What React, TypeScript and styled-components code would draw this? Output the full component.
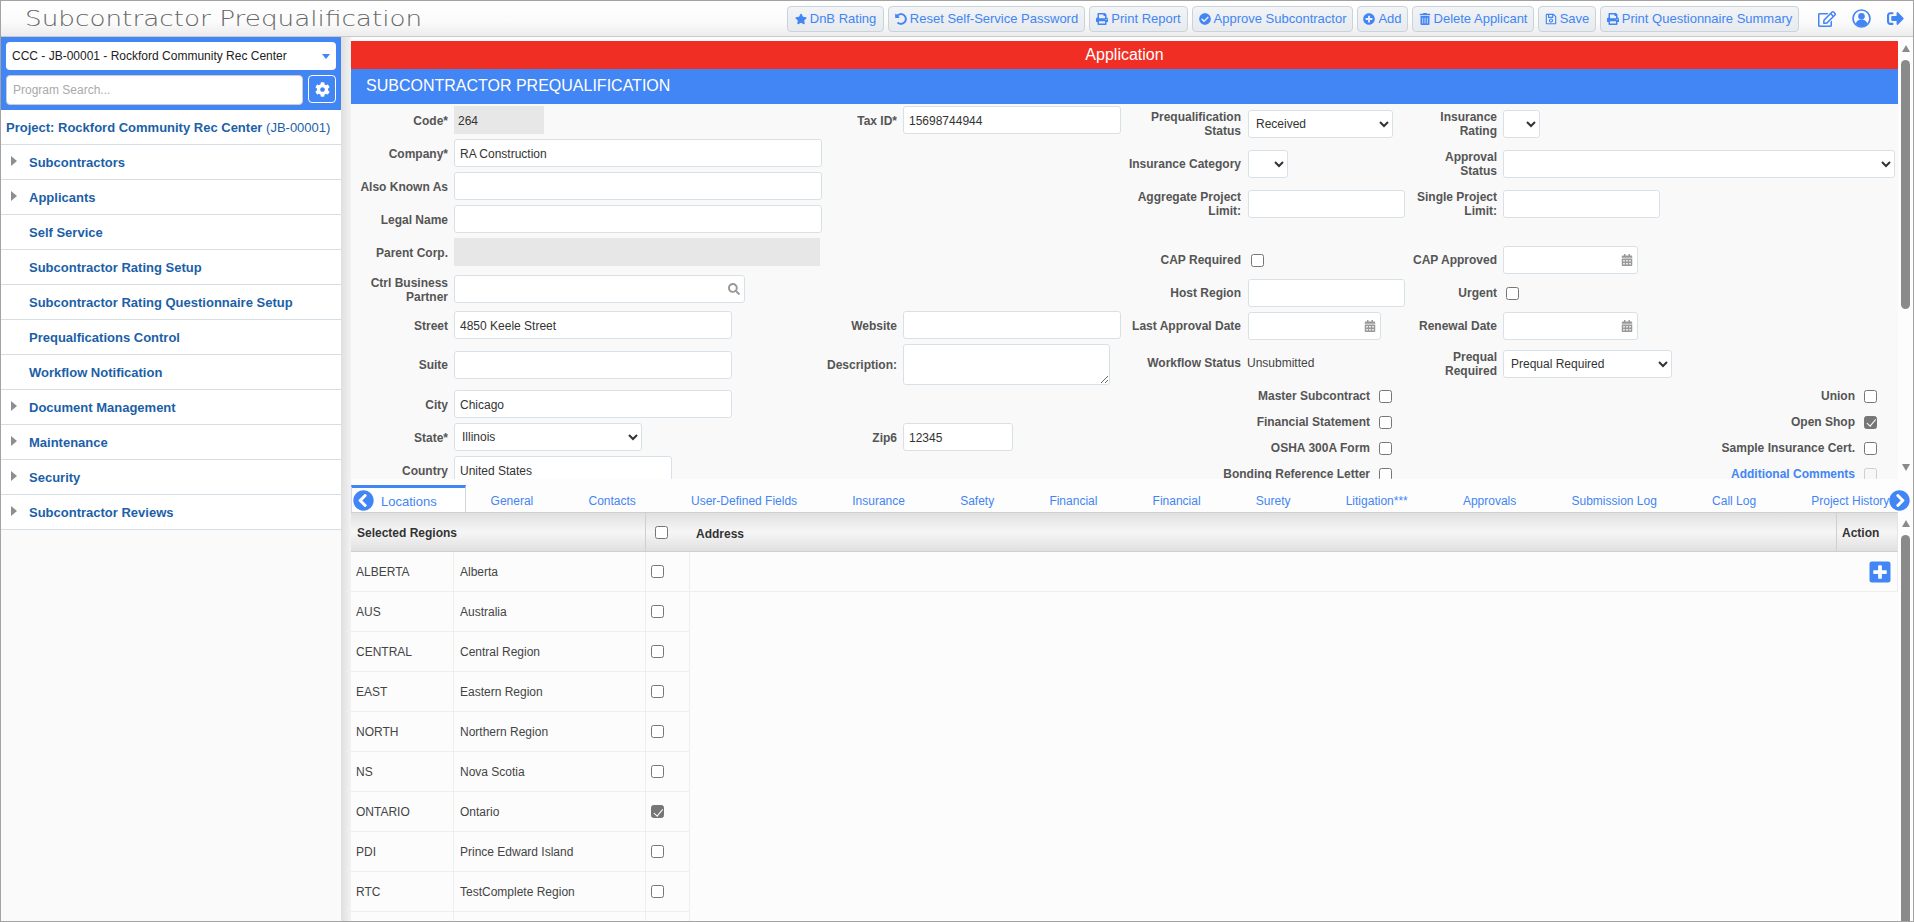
import React from 'react';
import styled, {createGlobalStyle} from 'styled-components';
import {
    FaStar, FaUndoAlt, FaPrint, FaCheckCircle, FaPlusCircle, FaTrashAlt, FaRegSave, FaRegEdit,
    FaSignOutAlt, FaCog, FaSearch, FaCalendarAlt, FaChevronCircleLeft, FaChevronCircleRight, FaPlusSquare,
} from 'react-icons/fa';

const sans = '"Liberation Sans", Arial, sans-serif';
const linkBlue = '#4285f4';

const GlobalStyle = createGlobalStyle`
    html, body { margin: 0; padding: 0; overflow: hidden; }
    body { font-family: ${sans}; background: #fff; }
    * { box-sizing: border-box; }
`;

const toolbarButtons = [
    {icon: <FaStar />, label: 'DnB Rating', width: 97},
    {icon: <FaUndoAlt />, label: 'Reset Self-Service Password', width: 197},
    {icon: <FaPrint />, label: 'Print Report', width: 99},
    {icon: <FaCheckCircle />, label: 'Approve Subcontractor', width: 161},
    {icon: <FaPlusCircle />, label: 'Add', width: 51},
    {icon: <FaTrashAlt />, label: 'Delete Applicant', width: 122},
    {icon: <FaRegSave />, label: 'Save', width: 58},
    {icon: <FaPrint />, label: 'Print Questionnaire Summary', width: 199},
];

const menuItems = [
    {label: 'Subcontractors', arrow: true},
    {label: 'Applicants', arrow: true},
    {label: 'Self Service'},
    {label: 'Subcontractor Rating Setup'},
    {label: 'Subcontractor Rating Questionnaire Setup'},
    {label: 'Prequalfications Control'},
    {label: 'Workflow Notification'},
    {label: 'Document Management', arrow: true},
    {label: 'Maintenance', arrow: true},
    {label: 'Security', arrow: true},
    {label: 'Subcontractor Reviews', arrow: true},
];

const tabs = ['General', 'Contacts', 'User-Defined Fields', 'Insurance', 'Safety', 'Financial', 'Financial', 'Surety', 'Litigation***', 'Approvals', 'Submission Log', 'Call Log', 'Project History'];

const regions = [
    ['ALBERTA', 'Alberta'],
    ['AUS', 'Australia'],
    ['CENTRAL', 'Central Region'],
    ['EAST', 'Eastern Region'],
    ['NORTH', 'Northern Region'],
    ['NS', 'Nova Scotia'],
    ['ONTARIO', 'Ontario', true],
    ['PDI', 'Prince Edward Island'],
    ['RTC', 'TestComplete Region'],
    ['', ''],
];

const UserIcon = () => (
    <svg width="19" height="19" viewBox="0 0 38 38">
        <circle cx="19" cy="19" r="17" fill="none" stroke={linkBlue} strokeWidth="3.4" />
        <circle cx="19" cy="14.5" r="6.6" fill={linkBlue} />
        <path d="M7.5 30c1-6 5-9 11.5-9s10.500 3 11.500 9c-3 3-7 4.600-11.500 4.600S10.500 33 7.500 30z" fill={linkBlue} />
    </svg>
);

export default function App() {
    return (
        <>
            <GlobalStyle />
            <Frame>
                <Header>
                    <TitleSlot>
                        <Title>Subcontractor Prequalification</Title>
                    </TitleSlot>
                    <Toolbar>
                        {toolbarButtons.map(({icon, label, width}) => (
                            <ToolButton key={label} $w={width}>{icon}{label}</ToolButton>
                        ))}
                    </Toolbar>
                    <HeaderIcons>
                        <FaRegEdit size={18} />
                        <UserIcon />
                        <FaSignOutAlt size={17} />
                    </HeaderIcons>
                </Header>
                <Body>
                    <Sidebar>
                        <SidebarTop>
                            <ProjectPicker>
                                CCC - JB-00001 - Rockford Community Rec Center
                                <PickerCaret />
                            </ProjectPicker>
                            <SearchRow>
                                <ProgramSearch placeholder="Program Search..." />
                                <GearButton><FaCog size={15} /></GearButton>
                            </SearchRow>
                        </SidebarTop>
                        <ProjectLine>Project: Rockford Community Rec Center <ProjectCode>(JB-00001)</ProjectCode></ProjectLine>
                        {menuItems.map(({label, arrow}) => (
                            <MenuItem key={label}>
                                {arrow && <MenuArrow />}
                                {label}
                            </MenuItem>
                        ))}
                    </Sidebar>
                    <Splitter />
                    <Main>
                        <UpperPane>
                            <UpperContent>
                                <RedBanner>Application</RedBanner>
                                <BlueBanner>SUBCONTRACTOR PREQUALIFICATION</BlueBanner>
                                <Form>
                                    <LeftGrid>
                                        <Label>Code*</Label>
                                        <ReadOnlyField $w={90}>264</ReadOnlyField>
                                        <Label>Tax ID*</Label>
                                        <Input defaultValue="15698744944" $w={218} />

                                        <Label>Company*</Label>
                                        <Input defaultValue="RA Construction" $w={368} />
                                        <Blank />

                                        <Label>Also Known As</Label>
                                        <Input $w={368} />
                                        <Blank />

                                        <Label>Legal Name</Label>
                                        <Input $w={368} />
                                        <Blank />

                                        <Label>Parent Corp.</Label>
                                        <ReadOnlyField $w={366} />
                                        <Blank />

                                        <Label>Ctrl Business Partner</Label>
                                        <IconField $w={291}>
                                            <Input $w={291} />
                                            <FieldIcon><FaSearch size={12} /></FieldIcon>
                                        </IconField>
                                        <Blank />

                                        <Label>Street</Label>
                                        <Input defaultValue="4850 Keele Street" $w={278} />
                                        <Label>Website</Label>
                                        <Input $w={218} />

                                        <CenteredLabel>Suite</CenteredLabel>
                                        <CenteredField><Input $w={278} /></CenteredField>
                                        <CenteredLabel>Description:</CenteredLabel>
                                        <Description />

                                        <Label>City</Label>
                                        <Input defaultValue="Chicago" $w={278} />
                                        <Blank />

                                        <Label>State*</Label>
                                        <Select $w={188} defaultValue="Illinois"><option>Illinois</option></Select>
                                        <Label>Zip6</Label>
                                        <Input defaultValue="12345" $w={110} />

                                        <Label>Country</Label>
                                        <Input defaultValue="United States" $w={218} />
                                        <Blank />
                                    </LeftGrid>
                                    <RightColumn>
                                        <RightGrid>
                                            <Label>Prequalification Status</Label>
                                            <Select $w={145} defaultValue="Received"><option>Received</option></Select>
                                            <Label>Insurance Rating</Label>
                                            <Select $w={37}><option></option></Select>

                                            <Label>Insurance Category</Label>
                                            <Select $w={40}><option></option></Select>
                                            <Label>Approval Status</Label>
                                            <Select $w={392}><option></option></Select>

                                            <Label>Aggregate Project Limit:</Label>
                                            <Input $w={157} />
                                            <Label>Single Project Limit:</Label>
                                            <Input $w={157} />

                                            <Label>CAP Required</Label>
                                            <FormCheck type="checkbox" />
                                            <Label>CAP Approved</Label>
                                            <IconField $w={135}>
                                                <Input $w={135} />
                                                <FieldIcon><FaCalendarAlt size={12} /></FieldIcon>
                                            </IconField>

                                            <Label>Host Region</Label>
                                            <Input $w={157} />
                                            <Label>Urgent</Label>
                                            <FormCheck type="checkbox" />

                                            <Label>Last Approval Date</Label>
                                            <IconField $w={133}>
                                                <Input $w={133} />
                                                <FieldIcon><FaCalendarAlt size={12} /></FieldIcon>
                                            </IconField>
                                            <Label>Renewal Date</Label>
                                            <IconField $w={135}>
                                                <Input $w={135} />
                                                <FieldIcon><FaCalendarAlt size={12} /></FieldIcon>
                                            </IconField>

                                            <WorkflowLabel>Workflow Status</WorkflowLabel>
                                            <PlainValue>Unsubmitted</PlainValue>
                                            <Label>Prequal Required</Label>
                                            <Select $w={169} defaultValue="Prequal Required"><option>Prequal Required</option></Select>
                                        </RightGrid>
                                        <CheckGrid>
                                            <CheckLabel>Master Subcontract</CheckLabel>
                                            <GridCheck type="checkbox" />
                                            <CheckLabel>Union</CheckLabel>
                                            <GridCheck type="checkbox" />

                                            <CheckLabel>Financial Statement</CheckLabel>
                                            <GridCheck type="checkbox" />
                                            <CheckLabel>Open Shop</CheckLabel>
                                            <GridCheck type="checkbox" defaultChecked />

                                            <CheckLabel>OSHA 300A Form</CheckLabel>
                                            <GridCheck type="checkbox" />
                                            <CheckLabel>Sample Insurance Cert.</CheckLabel>
                                            <GridCheck type="checkbox" />

                                            <CheckLabel>Bonding Reference Letter</CheckLabel>
                                            <GridCheck type="checkbox" />
                                            <LinkLabel>Additional Comments</LinkLabel>
                                            <GridCheck type="checkbox" disabled />
                                        </CheckGrid>
                                    </RightColumn>
                                </Form>
                            </UpperContent>
                            <ScrollRail $top={4}>
                                <ArrowUp />
                                <Thumb $h={249} />
                                <ArrowDown />
                            </ScrollRail>
                        </UpperPane>
                        <TabBar>
                            <ActiveTab>Locations</ActiveTab>
                            {tabs.map((tab, i) => <Tab key={tab + i}>{tab}</Tab>)}
                            <TabPrev><FaChevronCircleLeft size={21} /></TabPrev>
                            <TabNext><FaChevronCircleRight size={21} /></TabNext>
                        </TabBar>
                        <LowerPane>
                            <Tables>
                                <RegionsTable>
                                    <RegionsHead>
                                        <HeadTitle>Selected Regions</HeadTitle>
                                        <HeadCheckCell><Check type="checkbox" /></HeadCheckCell>
                                    </RegionsHead>
                                    {regions.map(([code, name, checked]) => (
                                        <RegionRow key={String(code)}>
                                            <RegionCell>{code}</RegionCell>
                                            <RegionCell>{name}</RegionCell>
                                            <RegionCheckCell>
                                                {code && <Check type="checkbox" defaultChecked={Boolean(checked)} />}
                                            </RegionCheckCell>
                                        </RegionRow>
                                    ))}
                                </RegionsTable>
                                <AddressTable>
                                    <AddressHead>
                                        <AddressTitle>Address</AddressTitle>
                                        <ActionTitle>Action</ActionTitle>
                                    </AddressHead>
                                    <AddressRow>
                                        <FaPlusSquare size={24} />
                                    </AddressRow>
                                </AddressTable>
                            </Tables>
                            <ScrollRail $top={8}>
                                <ArrowUp />
                                <Thumb $h={400} />
                            </ScrollRail>
                        </LowerPane>
                    </Main>
                </Body>
            </Frame>
        </>
    );
}

const Frame = styled.div`
    width: 1914px;
    height: 922px;
    display: flex;
    flex-direction: column;
    border: 1px solid #a3a3a3;
    overflow: hidden;
    background: #fcfcfc;
`;

const Header = styled.header`
    height: 36px;
    flex: none;
    display: flex;
    align-items: center;
    padding: 0 0 0 24px;
    background: linear-gradient(to bottom, #ffffff 0%, #fbfbfb 60%, #ececec 100%);
    border-bottom: 1px solid #c9c9c9;
`;

const TitleSlot = styled.div`
    width: 762px;
    flex: none;
`;

const Title = styled.div`
    display: inline-block;
    font-family: "DejaVu Sans", sans-serif;
    font-weight: 200;
    font-size: 21px;
    color: #666;
    white-space: nowrap;
    transform: scaleX(1.25);
    transform-origin: left center;
`;

const Toolbar = styled.div`
    display: flex;
    gap: 4px;
`;

const ToolButton = styled.button<{$w: number}>`
    width: ${({$w}) => $w}px;
    height: 26px;
    display: flex;
    align-items: center;
    justify-content: center;
    gap: 3px;
    padding: 0;
    font-family: ${sans};
    font-size: 13px;
    color: ${linkBlue};
    background: linear-gradient(to bottom, #f2f4f6, #e7eaee);
    border: 1px solid #c9d3dc;
    border-radius: 4px;
    white-space: nowrap;

    svg { font-size: 12px; }
`;

const HeaderIcons = styled.div`
    display: flex;
    align-items: center;
    gap: 16px;
    margin-left: 19px;
    color: ${linkBlue};
`;

const Body = styled.div`
    flex: 1;
    min-height: 0;
    display: flex;
`;

const Sidebar = styled.aside`
    width: 340px;
    flex: none;
    background: #fafafa;
`;

const SidebarTop = styled.div`
    height: 73px;
    padding: 5px 5px 0;
    background: ${linkBlue};
`;

const ProjectPicker = styled.div`
    height: 28px;
    display: flex;
    align-items: center;
    justify-content: space-between;
    padding: 0 6px;
    background: #fff;
    border-radius: 4px;
    font-size: 12px;
    color: #222;
`;

const PickerCaret = styled.span`
    width: 0;
    height: 0;
    border-left: 4px solid transparent;
    border-right: 4px solid transparent;
    border-top: 5px solid ${linkBlue};
`;

const SearchRow = styled.div`
    display: flex;
    justify-content: space-between;
    margin-top: 5px;
`;

const ProgramSearch = styled.input`
    width: 297px;
    height: 30px;
    padding: 0 6px;
    font-family: ${sans};
    font-size: 12px;
    background: #fff;
    border: 1px solid #ccc;
    border-radius: 4px;
    outline: none;

    &::placeholder { color: #aaa; opacity: 1; }
`;

const GearButton = styled.button`
    width: 28px;
    height: 28px;
    display: flex;
    align-items: center;
    justify-content: center;
    padding: 0;
    color: #fff;
    background: ${linkBlue};
    border: 1px solid #fff;
    border-radius: 4px;
`;

const ProjectLine = styled.div`
    height: 35px;
    display: flex;
    align-items: center;
    padding-left: 5px;
    background: #fff;
    border-bottom: 1px solid #d5dde5;
    font-size: 13px;
    font-weight: bold;
    color: #1c5fa8;
    white-space: pre;
`;

const ProjectCode = styled.span`
    font-weight: normal;
`;

const MenuItem = styled.div`
    position: relative;
    height: 35px;
    display: flex;
    align-items: center;
    padding-left: 28px;
    background: #fff;
    border-bottom: 1px solid #d5dde5;
    font-size: 13px;
    font-weight: bold;
    color: #1c5fa8;
`;

const MenuArrow = styled.span`
    position: absolute;
    left: 10px;
    top: 11px;
    width: 0;
    height: 0;
    border-top: 5.5px solid transparent;
    border-bottom: 5.5px solid transparent;
    border-left: 6px solid #8a8f94;
`;

const Splitter = styled.div`
    width: 10px;
    flex: none;
    background: linear-gradient(to right, #dfdfdf, #f2f2f2);
`;

const Main = styled.main`
    position: relative;
    flex: 1;
    min-width: 0;
    display: flex;
    flex-direction: column;
    padding-top: 4px;
`;

const UpperPane = styled.div`
    height: 438px;
    flex: none;
    display: flex;
`;

const UpperContent = styled.div`
    flex: 1;
    min-width: 0;
    display: flex;
    flex-direction: column;
    overflow: hidden;
`;

const RedBanner = styled.div`
    height: 28px;
    flex: none;
    display: flex;
    align-items: center;
    justify-content: center;
    background: #f12e24;
    color: #fff;
    font-size: 16px;
`;

const BlueBanner = styled.div`
    height: 35px;
    flex: none;
    display: flex;
    align-items: center;
    padding: 0 0 2px 15px;
    background: ${linkBlue};
    color: #fff;
    font-size: 16px;
`;

const Form = styled.div`
    flex: 1;
    min-height: 0;
    display: flex;
    background: #f9f9f9;
    overflow: hidden;
`;

const LeftGrid = styled.div`
    display: grid;
    grid-template-columns: 103px 368px 81px 218px;
    grid-template-rows: 28px 28px 28px 28px 32px 31px 28px 41px 28px 28px 28px;
    row-gap: 5px;
    padding-top: 2px;
    align-items: start;
    flex: none;
    width: 770px;
`;

const Blank = styled.span`
    grid-column: span 2;
`;

const Label = styled.label`
    height: 28px;
    display: flex;
    align-items: center;
    justify-content: flex-end;
    padding: 1px 6px 0 0;
    font-size: 12px;
    font-weight: bold;
    line-height: 14px;
    text-align: right;
    color: #555;
`;

const CenteredLabel = styled(Label)`
    height: 41px;
`;

const WorkflowLabel = styled(Label)`
    height: 26px;
`;

const CenteredField = styled.div`
    height: 41px;
    display: flex;
    align-items: center;
`;

const Input = styled.input<{$w: number}>`
    width: ${({$w}) => $w}px;
    height: 28px;
    padding: 1px 5px 0;
    font-family: ${sans};
    font-size: 12px;
    color: #333;
    background: #fff;
    border: 1px solid #d9e1e8;
    border-radius: 3px;
    outline: none;
`;

const ReadOnlyField = styled.div<{$w: number}>`
    width: ${({$w}) => $w}px;
    height: 28px;
    display: flex;
    align-items: center;
    padding: 1px 4px 0;
    font-size: 12px;
    color: #333;
    background: #e7e7e7;
`;

const Select = styled.select<{$w: number}>`
    width: ${({$w}) => $w}px;
    height: 28px;
    padding: 0 3px;
    font-family: ${sans};
    font-size: 12px;
    color: #333;
    background: #fff;
    border: 1px solid #d9e1e8;
    border-radius: 3px;
    outline: none;
`;

const Description = styled.textarea`
    width: 207px;
    height: 41px;
    display: block;
    background: #fff;
    border: 1px solid #d9e1e8;
    border-radius: 3px;
    outline: none;
`;

const IconField = styled.div<{$w: number}>`
    position: relative;
    width: ${({$w}) => $w}px;
    height: 28px;
`;

const FieldIcon = styled.span`
    position: absolute;
    right: 5px;
    top: 8px;
    display: flex;
    color: #999;
`;

const PlainValue = styled.div`
    height: 26px;
    display: flex;
    align-items: center;
    margin-left: -1px;
    font-size: 12px;
    color: #444;
`;

const RightColumn = styled.div`
    flex: none;
    padding-top: 6px;
`;

const RightGrid = styled.div`
    display: grid;
    grid-template-columns: 127px 160px 95px 392px;
    grid-template-rows: 40px 40px 56px 33px 33px 38px 33px;
    align-items: start;

    ${Label} { padding-top: 0; }
    ${Label}:nth-child(4n+1) { padding-right: 7px; }
`;

const Check = styled.input`
    appearance: none;
    position: relative;
    width: 13px;
    height: 13px;
    margin: 0;
    display: block;
    background: #fff;
    border: 1px solid #767676;
    border-radius: 2.5px;

    &:checked { background: #767676; }
    &:checked::after {
        content: '';
        position: absolute;
        left: 3.5px;
        top: 0.5px;
        width: 3.5px;
        height: 7.5px;
        border: solid #fff;
        border-width: 0 1.8px 1.8px 0;
        transform: rotate(40deg);
    }
    &:disabled { border-color: #cfcfcf; background: #f7f7f7; }
`;

const FormCheck = styled(Check)`
    margin: 8px 0 0 3px;
`;

const CheckGrid = styled.div`
    display: grid;
    grid-template-columns: 249px 22px 463px 23px;
    grid-auto-rows: 26px;
    align-items: center;
`;

const CheckLabel = styled.label`
    text-align: right;
    font-size: 12px;
    font-weight: bold;
    color: #555;
`;

const LinkLabel = styled(CheckLabel)`
    color: ${linkBlue};
`;

const GridCheck = styled(Check)`
    margin-left: 9px;
`;

const ScrollRail = styled.div<{$top: number}>`
    width: 15px;
    flex: none;
    display: flex;
    flex-direction: column;
    align-items: center;
    gap: 8px;
    padding: ${({$top}) => $top}px 0 8px;
    background: #fdfdfd;
`;

const ArrowUp = styled.span`
    width: 0;
    height: 0;
    flex: none;
    border-left: 4.5px solid transparent;
    border-right: 4.5px solid transparent;
    border-bottom: 7px solid #8a8a8a;
`;

const ArrowDown = styled.span`
    width: 0;
    height: 0;
    flex: none;
    margin-top: auto;
    border-left: 4.5px solid transparent;
    border-right: 4.5px solid transparent;
    border-top: 7px solid #8a8a8a;
`;

const Thumb = styled.span<{$h: number}>`
    width: 9px;
    height: ${({$h}) => $h}px;
    flex: none;
    background: #8a8a8a;
    border-radius: 5px;
`;

const TabBar = styled.nav`
    position: relative;
    height: 33px;
    flex: none;
    display: flex;
    align-items: flex-end;
    background: #fdfdfd;
    overflow: hidden;
`;

const Tab = styled.div`
    height: 27px;
    flex: none;
    display: flex;
    align-items: center;
    padding: 4px 27.6px 0;
    font-size: 12px;
    color: ${linkBlue};
    white-space: nowrap;
`;

const ActiveTab = styled(Tab)`
    width: 115px;
    margin-right: -3px;
    padding: 3px 0 0 29px;
    font-size: 13px;
    background: #fff;
    border-top: 3px solid ${linkBlue};
    border-left: 1px solid #d0d7de;
    border-right: 1px solid #d0d7de;
`;

const TabPrev = styled.span`
    position: absolute;
    left: 2px;
    bottom: 1px;
    display: flex;
    color: ${linkBlue};
`;

const TabNext = styled.span`
    position: absolute;
    right: 3px;
    bottom: 1px;
    display: flex;
    color: ${linkBlue};
`;

const LowerPane = styled.div`
    flex: 1;
    min-height: 0;
    display: flex;
    overflow: hidden;
`;

const Tables = styled.div`
    flex: 1;
    min-width: 0;
    display: flex;
    overflow: hidden;
`;

const headBackground = `linear-gradient(to bottom, #e0e0e0 0%, #f6f6f6 50%, #e0e0e0 100%)`;

const RegionsTable = styled.div`
    width: 339px;
    flex: none;
`;

const RegionsHead = styled.div`
    height: 40px;
    display: grid;
    grid-template-columns: 294px 45px;
    background: ${headBackground};
    border-top: 1px solid #cfcfcf;
    border-bottom: 1px solid #cfcfcf;
`;

const HeadTitle = styled.div`
    display: flex;
    align-items: center;
    padding: 1px 0 0 6px;
    font-size: 12px;
    font-weight: bold;
    color: #333;
`;

const HeadCheckCell = styled.div`
    display: flex;
    align-items: center;
    padding-left: 9px;
    border-left: 1px solid #cfcfcf;
`;

const RegionRow = styled.div`
    height: 40px;
    display: grid;
    grid-template-columns: 102px 192px 45px;
    border-bottom: 1px solid #eee;
`;

const RegionCell = styled.div`
    display: flex;
    align-items: center;
    padding-left: 5px;
    font-size: 12px;
    color: #444;

    & + & { padding-left: 6px; border-left: 1px solid #eee; }
`;

const RegionCheckCell = styled.div`
    display: flex;
    align-items: center;
    padding-left: 5px;
    border-left: 1px solid #eee;
    border-right: 1px solid #eee;
`;

const AddressTable = styled.div`
    flex: 1;
    min-width: 0;
`;

const AddressHead = styled.div`
    height: 40px;
    display: grid;
    grid-template-columns: 1fr 61px;
    background: ${headBackground};
    border-top: 1px solid #cfcfcf;
    border-bottom: 1px solid #cfcfcf;
    border-right: 1px solid #e4e4e4;
`;

const AddressTitle = styled.div`
    display: flex;
    align-items: center;
    padding: 3px 0 0 6px;
    font-size: 12px;
    font-weight: bold;
    color: #333;
`;

const ActionTitle = styled.div`
    display: flex;
    align-items: center;
    padding: 1px 0 0 5px;
    font-size: 12px;
    font-weight: bold;
    color: #333;
    border-left: 1px solid #cfcfcf;
`;

const AddressRow = styled.div`
    height: 40px;
    display: flex;
    align-items: center;
    justify-content: flex-end;
    padding-right: 5px;
    color: ${linkBlue};
    border-bottom: 1px solid #eee;
    border-right: 1px solid #eee;
`;
